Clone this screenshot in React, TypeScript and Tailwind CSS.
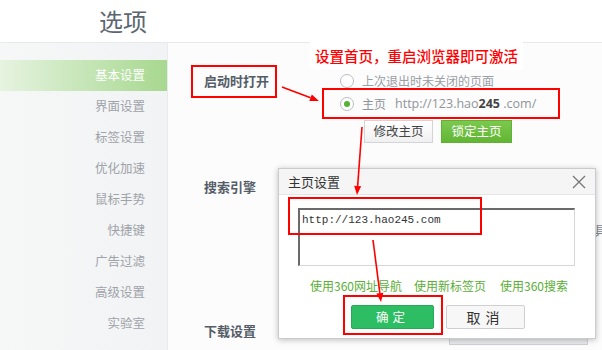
const menu = ["基本设置", "界面设置", "标签设置", "优化加速", "鼠标手势", "快捷键", "广告过滤", "高级设置", "实验室"];

function Radio({ checked }: { checked?: boolean }) {
  return (
    <span className="flex h-[14px] w-[14px] items-center justify-center rounded-full border border-[#b9bcc0] bg-white">
      {checked && <span className="h-[6px] w-[6px] rounded-full bg-[#56b232]" />}
    </span>
  );
}

function Arrow({ x1, y1, x2, y2 }: { x1: number; y1: number; x2: number; y2: number }) {
  const a = Math.atan2(y2 - y1, x2 - x1);
  const len = 9;
  const w = 3.5;
  const bx = x2 - len * Math.cos(a);
  const by = y2 - len * Math.sin(a);
  const px = -Math.sin(a) * w;
  const py = Math.cos(a) * w;
  return (
    <g>
      <line x1={x1} y1={y1} x2={bx} y2={by} stroke="#ff0000" strokeWidth="1.6" />
      <polygon points={`${x2},${y2} ${bx + px},${by + py} ${bx - px},${by - py}`} fill="#ff0000" />
    </g>
  );
}

export default function App() {
  return (
    <div className="relative h-[350px] w-[602px] overflow-hidden bg-white font-['Noto_Sans_CJK_SC',sans-serif]">
      <header className="flex h-[43px] items-center border-b border-[#e8e9ea] pl-[99px] text-[24px] text-[#5b6670]">
        选项
      </header>

      <div className="flex h-[307px]">
        <aside className="w-[168px] border-r border-[#e9eaeb] bg-gradient-to-r from-[#f6f7f7] to-[#f2f3f4] pt-[17px]">
          {menu.map((m, i) => (
            <div
              key={m}
              className={
                i === 0
                  ? "flex h-[31px] items-center justify-end bg-gradient-to-r from-[#e6f3e0] to-[#a7d88f] pr-[22px] text-[12.5px] text-white"
                  : "flex h-[31px] items-center justify-end pr-[22px] text-[12.5px] text-[#9ea3aa]"
              }
            >
              {m}
            </div>
          ))}
        </aside>

        <main className="flex-1 bg-[#fcfcfc] pl-[36px] pt-[28px] text-[13px]">
          <section className="flex">
            <div className="h-[20px] w-[136px] font-bold leading-[20px] text-[#555e68]">启动时打开</div>
            <div>
              <div className="flex h-[20px] items-center gap-[8px] text-[12px] text-[#9a9ea5]">
                <Radio />
                上次退出时未关闭的页面
              </div>
              <div className="mt-[3px] flex h-[20px] items-center gap-[8px] text-[#8f949a]">
                <Radio checked />
                <span className="text-[12px]">主页</span>
                <span className="ml-[1px] font-['Open_Sans',sans-serif] text-[12.5px]">
                  http://123.hao<b className="text-[#444]">245</b> .com/
                </span>
              </div>
              <div className="ml-[24px] mt-[6px] flex gap-[8px]">
                <button className="h-[23px] w-[69px] border border-[#d2d4d6] bg-gradient-to-b from-white to-[#f0f0f0] text-[12.5px] text-[#444]">
                  修改主页
                </button>
                <button className="h-[23px] w-[71px] border border-[#5fb236] bg-gradient-to-b from-[#7cc84f] to-[#62b633] text-[12.5px] text-white">
                  锁定主页
                </button>
              </div>
            </div>
          </section>

          <section className="mt-[34px] h-[20px] font-bold leading-[20px] text-[#555e68]">搜索引擎</section>
          <section className="mt-[124px] h-[20px] font-bold leading-[20px] text-[#555e68]">下载设置</section>
        </main>
      </div>

      {/* partial content peeking out at the right edge */}
      <span className="absolute left-[594px] top-[220px] text-[13px] text-[#7f8a96]">具</span>
      {/* element behind the dialog */}
      <div className="absolute left-[449px] top-[334px] h-[11px] w-[139px] border border-[#cfd1d3] bg-[#e9eaeb]" />

      {/* dialog */}
      <div className="absolute left-[278px] top-[168px] h-[171px] w-[318px] border border-[#c9cbcd] bg-white shadow-[0_1px_6px_rgba(0,0,0,0.25)]">
        <div className="flex h-[26px] items-center justify-between border-b border-[#e4e4e4] bg-[#f5f5f5] pl-[9px] pr-[9px] text-[13px] text-[#333]">
          主页设置
          <svg width="14" height="14" viewBox="0 0 14 14">
            <path d="M1 1 L13 13 M13 1 L1 13" stroke="#777" strokeWidth="1.3" />
          </svg>
        </div>
        <div className="ml-[19px] mt-[13px] h-[58px] w-[277px] border border-[#d6d6d6] border-l-[2px] border-t-[2px] border-l-[#6a6a6a] border-t-[#6a6a6a] bg-white pl-[2px] pt-[2px] font-['Liberation_Mono',monospace] text-[11px] text-[#333]">
          http://123.hao245.com
        </div>
        <div className="mt-[11px] flex text-[12px] text-[#5aae36]">
          <span className="ml-[31px]">使用360网址导航</span>
          <span className="ml-[12px]">使用新标签页</span>
          <span className="ml-[14px]">使用360搜索</span>
        </div>
        <div className="ml-[72px] mt-[10px] flex gap-[12px]">
          <button className="h-[24px] w-[83px] rounded-[2px] border border-[#27a957] bg-[#2dbd62] text-[12.5px] tracking-[4px] text-white">
            确定
          </button>
          <button className="h-[24px] w-[79px] rounded-[2px] border border-[#cfcfcf] bg-[#f7f7f7] text-[14px] tracking-[5px] text-[#333]">
            取消
          </button>
        </div>
      </div>

      {/* annotations */}
      <div className="absolute left-[310px] top-[42px] flex h-[28px] w-[213px] items-center justify-center bg-white text-[14.5px] font-medium text-[#ff0000]">
        设置首页，重启浏览器即可激活
      </div>
      <div className="absolute left-[191px] top-[65px] h-[33px] w-[86px] border-2 border-[#ff0000]" />
      <div className="absolute left-[322px] top-[88px] h-[31px] w-[238px] border-2 border-[#ff0000]" />
      <div className="absolute left-[288px] top-[197px] h-[38px] w-[194px] border-2 border-[#ff0000]" />
      <div className="absolute left-[343px] top-[295px] h-[40px] w-[100px] border-2 border-[#ff0000]" />
      <svg className="pointer-events-none absolute left-0 top-0" width="602" height="350">
        <Arrow x1={282} y1={87} x2={319} y2={101} />
        <Arrow x1={362} y1={127} x2={357} y2={195} />
        <Arrow x1={373} y1={240} x2={381} y2={302} />
      </svg>
    </div>
  );
}
